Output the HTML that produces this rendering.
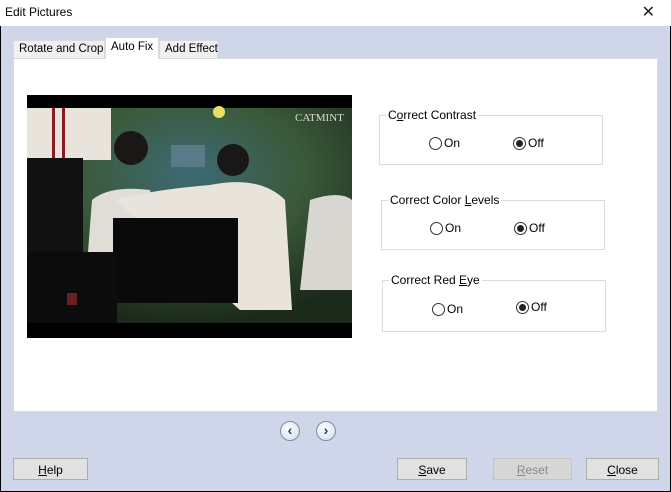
<!DOCTYPE html>
<html><head><style>
*{box-sizing:border-box;margin:0;padding:0}
body{width:671px;height:492px;overflow:hidden;font-family:"Liberation Sans",sans-serif;font-size:12px;color:#000;background:#fff}
.win{position:absolute;left:0;top:0;width:671px;height:492px;border:1px solid #000;border-top:none;background:#d0d6ea}
.win>*{white-space:nowrap}
.title{position:absolute;left:-1px;top:0;width:671px;height:26px;background:#fff;font-size:12px;padding:5px 0 0 5px}
.x{position:absolute;right:16px;top:2px;font-size:16px;font-weight:100;color:#222}
.tab{position:absolute;top:40px;height:19px;background:#f0f0f0;border:1px solid #d9d9d9;border-bottom:none;padding:2px 0 0 5px}
.panel{position:absolute;left:12px;top:58px;width:645px;height:354px;background:#fff;border:1px solid #d9d9d9}
.grp{position:absolute;border:1px solid #dcdcdc}
.grp .l{position:absolute;top:-8px;left:6px;background:#fff;padding:0 2px}
.r{position:absolute;top:20px;display:flex;align-items:center}
.rc{width:13px;height:13px;border:1px solid #333;border-radius:50%;margin-right:2px;position:relative;background:#fff}
.rc.on::after{content:"";position:absolute;left:2px;top:2px;width:7px;height:7px;border-radius:50%;background:#222}
.btn{position:absolute;top:458px;height:22px;background:#e1e1e1;border:1px solid #adadad;text-align:center;padding-top:4px}
.nav{position:absolute;top:421px;width:20px;height:20px;border-radius:50%;border:1px solid #7a8aa8;background:radial-gradient(circle at 40% 35%,#fff,#cfdbe8);color:#1d3a6e;font-weight:bold;font-size:14px;text-align:center;line-height:16px}
</style></head><body>
<div class="win">
<div class="title">Edit Pictures<span class="x">✕</span></div>
<div class="tab" style="left:12px;width:92px;font-size:11.5px">Rotate and Crop</div>
<div class="tab" style="left:158px;width:59px;font-size:11.5px">Add Effect</div>
<div class="panel"></div>
<div class="tab" style="left:104px;top:37px;width:54px;height:22px;background:#fff;padding-top:3px;font-size:11.5px">Auto Fix</div>
<svg style="position:absolute;left:26px;top:95px" width="325" height="243" viewBox="27 95 325 243">
<defs><radialGradient id="bg" cx="0.5" cy="0.3" r="0.7"><stop offset="0" stop-color="#3d6a74"/><stop offset="0.5" stop-color="#3b5a3a"/><stop offset="1" stop-color="#1c2a1c"/></radialGradient></defs>
<rect x="27" y="95" width="325" height="243" fill="#000"/>
<rect x="27" y="108" width="325" height="215" fill="url(#bg)"/>
<circle cx="219" cy="112" r="6" fill="#e8e060"/>
<rect x="171" y="145" width="34" height="22" fill="#5a7a88"/>
<text x="295" y="121" font-size="11" fill="#ddd" font-family="Liberation Serif">CATMINT</text>
<rect x="27" y="108" width="84" height="52" fill="#e8e4dc"/>
<rect x="52" y="108" width="3" height="52" fill="#8a1a22"/><rect x="62" y="108" width="3" height="52" fill="#8a1a22"/>
<rect x="27" y="158" width="56" height="94" fill="#111"/>
<path d="M88 252 L92 200 Q110 185 150 190 L165 252 Z" fill="#e0dcd6"/>
<circle cx="131" cy="148" r="17" fill="#1a1816"/>
<path d="M115 200 Q150 190 210 185 Q260 175 285 200 L292 310 L240 310 Z" fill="#e8e4dc"/>
<circle cx="233" cy="160" r="16" fill="#1a1816"/>
<path d="M310 200 Q340 190 352 200 L352 290 L300 290 Z" fill="#d8d6d0"/>
<rect x="113" y="218" width="125" height="85" fill="#0a0a0a"/>
<rect x="27" y="252" width="90" height="71" fill="#0c0c0c"/>
<rect x="67" y="293" width="10" height="12" fill="#6a2020"/>
</svg>
<div class="grp" style="left:378px;top:115px;width:224px;height:50px"><span class="l">C<u>o</u>rrect Contrast</span>
<div class="r" style="left:49px"><span class="rc"></span>On</div><div class="r" style="left:133px"><span class="rc on"></span>Off</div></div>
<div class="grp" style="left:380px;top:200px;width:224px;height:50px"><span class="l">Correct Color <u>L</u>evels</span>
<div class="r" style="left:48px"><span class="rc"></span>On</div><div class="r" style="left:132px"><span class="rc on"></span>Off</div></div>
<div class="grp" style="left:381px;top:280px;width:224px;height:52px"><span class="l">Correct Red <u>E</u>ye</span>
<div class="r" style="left:49px;top:21px"><span class="rc"></span>On</div><div class="r" style="left:133px;top:19px"><span class="rc on"></span>Off</div></div>
<div class="nav" style="left:279px">&lsaquo;</div>
<div class="nav" style="left:315px">&rsaquo;</div>
<div class="btn" style="left:12px;width:75px"><u>H</u>elp</div>
<div class="btn" style="left:396px;width:70px"><u>S</u>ave</div>
<div class="btn" style="left:492px;width:79px;color:#8a8a8a;background:#d6d6d6;border-color:#c4c4c4"><u>R</u>eset</div>
<div class="btn" style="left:585px;width:73px"><u>C</u>lose</div>
</div>
</body></html>
